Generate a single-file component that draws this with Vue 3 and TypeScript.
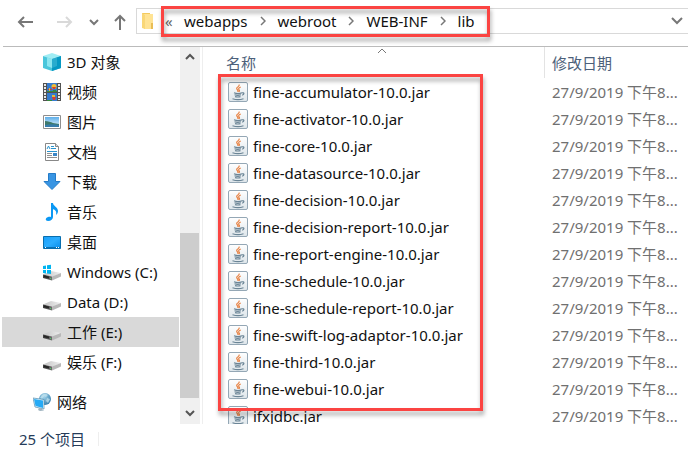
<script setup lang="ts">
interface Place {
  label: string
  icon: string
  root?: boolean
  selected?: boolean
}

const crumbs: string[] = ['webapps', 'webroot', 'WEB-INF', 'lib']

const places: Place[] = [
  { label: '3D 对象', icon: 'cube' },
  { label: '视频', icon: 'video' },
  { label: '图片', icon: 'picture' },
  { label: '文档', icon: 'document' },
  { label: '下载', icon: 'download' },
  { label: '音乐', icon: 'music' },
  { label: '桌面', icon: 'desktop' },
  { label: 'Windows (C:)', icon: 'windrive' },
  { label: 'Data (D:)', icon: 'drive' },
  { label: '工作 (E:)', icon: 'drive', selected: true },
  { label: '娱乐 (F:)', icon: 'drive' },
  { label: '网络', icon: 'network', root: true },
]

const files: string[] = [
  'fine-accumulator-10.0.jar',
  'fine-activator-10.0.jar',
  'fine-core-10.0.jar',
  'fine-datasource-10.0.jar',
  'fine-decision-10.0.jar',
  'fine-decision-report-10.0.jar',
  'fine-report-engine-10.0.jar',
  'fine-schedule-10.0.jar',
  'fine-schedule-report-10.0.jar',
  'fine-swift-log-adaptor-10.0.jar',
  'fine-third-10.0.jar',
  'fine-webui-10.0.jar',
  'ifxjdbc.jar',
]
const modified = '27/9/2019 下午8...'
</script>

<template>
  <div class="explorer">
    <svg class="sprite" aria-hidden="true">
      <defs>
        <linearGradient id="drive-top" x1="0" y1="0" x2="1" y2="0">
          <stop offset="0" stop-color="#c4c4c4" />
          <stop offset="1" stop-color="#eeeeee" />
        </linearGradient>
        <linearGradient id="drive-front" x1="0" y1="0" x2="1" y2="0">
          <stop offset="0" stop-color="#3c3c3c" />
          <stop offset="1" stop-color="#6e6e6e" />
        </linearGradient>
        <linearGradient id="tile" x1="0" y1="0" x2="0" y2="1">
          <stop offset="0" stop-color="#ffffff" />
          <stop offset="1" stop-color="#dde5ea" />
        </linearGradient>
        <linearGradient id="screen" x1="0" y1="0" x2="1" y2="1">
          <stop offset="0" stop-color="#18a0fb" />
          <stop offset="0.5" stop-color="#2cadff" />
          <stop offset="1" stop-color="#078ce9" />
        </linearGradient>
        <linearGradient id="sky" x1="0" y1="0" x2="0" y2="1">
          <stop offset="0" stop-color="#5eafea" />
          <stop offset="1" stop-color="#e8f6fc" />
        </linearGradient>
        <radialGradient id="globe" cx="0.4" cy="0.3" r="0.8">
          <stop offset="0" stop-color="#a8d8ed" />
          <stop offset="1" stop-color="#2875a8" />
        </radialGradient>
      </defs>
      <symbol id="cube" viewBox="0 0 18 18">
        <path d="M0 3 9 0l9 3-9 3z" fill="#a0edf4" />
        <path d="M0 3 9 6v12l-9-3z" fill="#49c6db" />
        <path d="M18 3 9 6v12l9-3z" fill="#079ac2" />
        <path d="M4 4.500 9 6l5-1.500V13l-5 2-5-2z" fill="#8be6f0" />
        <path d="M9 6v12l9-3V3z" fill="#0798c3" opacity=".75" />
      </symbol>
      <symbol id="video" viewBox="0 0 18 18">
        <path d="M0 0h18v18H0z" fill="#525252" />
        <path d="M4 0h10v9H4zM4 10h10v8H4z" fill="#377cce" />
        <path d="M1 1h2v2H1zM1 4h2v2H1zM1 7h2v2H1zM1 10h2v2H1zM1 13h2v2H1zM1 16h2v1H1zM15 1h2v2h-2zM15 4h2v2h-2zM15 7h2v2h-2zM15 10h2v2h-2zM15 13h2v2h-2zM15 16h2v1h-2z" fill="#e9e9e9" />
        <circle cx="11" cy="3.500" r="2.500" fill="#efbd36" />
        <path d="M9 4h4l-1 2h-2zM5 6h4v1H5zM9 14h4l-1 3h-2z" fill="#d43f33" />
        <path d="M4 8h10v1H4zM10 7h3v1h-3zM4 17h5v1H4z" fill="#37883f" />
        <path d="M6 5h1v3H6zM9 12h3v2H9z" fill="#e4b937" />
      </symbol>
      <symbol id="picture" viewBox="0 0 18 18">
        <path d="M.5 2.500h17v13H.5z" fill="#fff" stroke="#8e8e8e" />
        <path d="M2 4h14v10H2z" fill="url(#sky)" />
        <path d="M2 8c3 0 6 1 8 2l6 1v1H2z" fill="#3e796b" />
        <path d="M2 12c5-1 9-1 14 0v2H2z" fill="#367cab" />
      </symbol>
      <symbol id="document" viewBox="0 0 18 18">
        <path d="M2.500.5h10l3 3v14h-13z" fill="#fff" stroke="#888" />
        <path d="M12.500.5v3h3" fill="#ddd" stroke="#888" />
        <path d="m4 6 1.500-3L7 6M8 3.500h3M8 5.500h5M4 8.500h10" fill="none" stroke="#2893ce" />
        <path d="M4 10.500h5M4 12.500h5M4 14.500h10" stroke="#909090" />
        <path d="M10 10h4v3h-4z" fill="#3986c6" />
      </symbol>
      <symbol id="download" viewBox="0 0 18 18">
        <path d="M5.500.5h7v8h4.500L9 16.500 1 8.500h4.500z" fill="#3995e3" stroke="#247bc8" />
      </symbol>
      <symbol id="music" viewBox="0 0 18 18">
        <path d="M8 0h2c0 3 5 4 5 8 0 2-1 3-2 4 1-4-1-5-3-6v8c0 2-2 4-5 4-3 0-3-3 0-4 1-.5 2-.5 3 0z" fill="#0b98f4" />
      </symbol>
      <symbol id="desktop" viewBox="0 0 18 18">
        <path d="M.5 3.500h17v12H.5z" fill="url(#screen)" stroke="#096eae" />
        <path d="M1 14h16v1H1z" fill="#0871b5" />
        <path d="M2 14h1v1H2zM13 14h1v1h-1zM15 14h1v1h-1z" fill="#fff" />
      </symbol>
      <symbol id="drive" viewBox="0 0 18 18">
        <path d="m0 11.500 8-3.500 10 2-8 3.500z" fill="url(#drive-top)" />
        <path d="m9 13.500 9-3.500v3.500L9 17.500z" fill="#b8b8b8" />
        <path d="m0 11.500 9 2v4l-9-2.500z" fill="url(#drive-front)" />
        <path d="m1 12.500 5 1v2l-5-1.200z" fill="#262626" />
        <path d="M7 15h1v1H7z" fill="#45d064" />
      </symbol>
      <symbol id="windrive" viewBox="0 0 18 18">
        <use href="#drive" width="18" height="18" />
        <path d="m0 3 3-.5V6H0zM4 2.300 8 1.700V6H4zM0 7h3v3.500L0 10zM4 7h4v4l-4-.5z" fill="#00b5f1" />
      </symbol>
      <symbol id="network" viewBox="0 0 18 18">
        <circle cx="12" cy="6" r="6" fill="url(#globe)" />
        <path d="M9 2c2-2 4-2 6 0l-2 2-2-1-2 3-2-1zM14 5l3 1-2 4-2-2z" fill="#c7e6ef" opacity=".7" />
        <path d="m0 5 11 1.500V16L2 14z" fill="#e9f7fc" stroke="#4e8aad" stroke-width=".7" />
        <path d="m1 6 9 1.500V15l-7.500-2z" fill="#26aaf5" />
        <path d="m6 15 3 .5V16l2 1.500-4 .5-2-1z" fill="#9fb4c0" />
      </symbol>
      <symbol id="jar" viewBox="0 0 20 20">
        <rect x=".5" y=".5" width="19" height="19" rx="1.500" fill="url(#tile)" stroke="#94a7b5" />
        <path d="M11 2.500c1.500 2-4 3-1.800 5 1 1 1.200 1.600.5 2.500M12.800 5c-2.500 1-2.500 2-1.700 3 .7.8.4 1.300-.4 1.800" fill="none" stroke="#e88243" stroke-width="1.200" />
        <path d="M6 10.800c2 .8 6 .8 8 0M6.500 12.800c2 .6 4.500.6 6.500 0M7 14.600c2 .6 3.500.6 5.500 0M4.500 16.700c3 1 8 1 11 0M14 10.800c2.500-.4 2.500 1.600.2 2.400" fill="none" stroke="#6b8596" stroke-width="1.200" />
      </symbol>
    </svg>

    <header class="toolbar">
      <nav class="history" aria-label="History">
        <button type="button" aria-label="Back">
          <svg width="18" height="18" viewBox="0 0 18 18"><path d="M16 9H2M7 4 2 9l5 5" /></svg>
        </button>
        <button type="button" class="faded" aria-label="Forward">
          <svg width="18" height="18" viewBox="0 0 18 18"><path d="M2 9h14M11 4l5 5-5 5" /></svg>
        </button>
        <button type="button" class="recent" aria-label="Recent locations">
          <svg width="10" height="18" viewBox="0 0 10 18"><path d="m1 7 4 4 4-4" /></svg>
        </button>
        <button type="button" aria-label="Up">
          <svg width="18" height="18" viewBox="0 0 18 18"><path d="M9 17V3M4 8l5-5 5 5" /></svg>
        </button>
      </nav>
      <nav class="address" aria-label="Address">
        <svg class="folder" width="14" height="18" viewBox="0 0 14 18" aria-hidden="true">
          <path d="M1 1h8v15H1z" fill="#f3c95e" />
          <path d="M3 2h9v15H3z" fill="#ffe394" />
          <path d="m1 1 3 2v14l-3-1z" fill="#f9d777" />
          <path d="M10 11h2v6h-2z" fill="#e9bd55" />
        </svg>
        <ol class="crumbs">
          <li class="overflow">«</li>
          <li v-for="(crumb, i) in crumbs" :key="crumb">
            <svg v-if="i > 0" width="6" height="10" viewBox="0 0 6 10" aria-hidden="true"><path d="m1 1 4 4-4 4" /></svg>
            <a href="#">{{ crumb }}</a>
          </li>
        </ol>
        <button type="button" class="expand" aria-label="Previous locations">
          <svg width="12" height="8" viewBox="0 0 12 8"><path d="m1 1 5 5 5-5" /></svg>
        </button>
        <div class="callout callout-path"></div>
      </nav>
    </header>

    <main class="body">
      <aside class="sidebar">
        <ul class="places">
          <li v-for="place in places" :key="place.label" :class="{ root: place.root }">
            <a href="#" :class="{ selected: place.selected }">
              <svg width="18" height="18" aria-hidden="true"><use :href="'#' + place.icon" /></svg>
              <span>{{ place.label }}</span>
            </a>
          </li>
        </ul>
        <div class="scrollbar">
          <button type="button" aria-label="Scroll up">
            <svg width="10" height="8" viewBox="0 0 10 8"><path d="m1 6 4-4 4 4" /></svg>
          </button>
          <div class="track"><div class="thumb"></div></div>
          <button type="button" aria-label="Scroll down">
            <svg width="10" height="8" viewBox="0 0 10 8"><path d="m1 2 4 4 4-4" /></svg>
          </button>
        </div>
      </aside>

      <section class="listing">
        <table>
          <thead>
            <tr>
              <th class="name" scope="col">
                名称
                <svg class="sort" width="10" height="6" viewBox="0 0 10 6" aria-hidden="true"><path d="m1 5 4-4 4 4" /></svg>
              </th>
              <th scope="col">修改日期</th>
            </tr>
          </thead>
          <tbody>
            <tr v-for="file in files" :key="file">
              <td class="name">
                <div class="file">
                  <svg width="20" height="20" aria-hidden="true"><use href="#jar" /></svg>
                  <span>{{ file }}</span>
                </div>
              </td>
              <td class="date">{{ modified }}</td>
            </tr>
          </tbody>
        </table>
      </section>
      <div class="callout callout-files"></div>
    </main>

    <footer class="status"><span>25 个项目</span></footer>
  </div>
</template>

<style>
body {
  margin: 0;
  background: #fff;
}
</style>

<style scoped>
.explorer {
  display: flex;
  flex-direction: column;
  height: 100vh;
  overflow: hidden;
  font: 15px/20px "Noto Sans", "Noto Sans CJK SC", sans-serif;
  color: #111;
}
.sprite {
  position: absolute;
  width: 0;
  height: 0;
}
button {
  display: flex;
  align-items: center;
  justify-content: center;
  padding: 0;
  border: 0;
  background: none;
}
button path,
.crumbs path,
.sort path {
  fill: none;
  stroke: #777;
  stroke-width: 2;
}
a {
  color: inherit;
  text-decoration: none;
}
ul,
ol {
  margin: 0;
  padding: 0;
  list-style: none;
}
.toolbar {
  display: flex;
  flex: none;
  box-sizing: border-box;
  height: 47px;
  margin-left: 3px;
  padding-top: 8px;
  border-bottom: 1px solid #bbb;
}
.history {
  display: flex;
  gap: 20px;
  align-items: center;
  width: 119px;
  height: 27px;
  padding-left: 14px;
}
.history .faded path {
  stroke: #d9d9d9;
}
.history .recent {
  margin-right: -8px;
  margin-left: -4px;
}
.address {
  position: relative;
  display: flex;
  flex: 1;
  align-items: center;
  box-sizing: border-box;
  height: 26px;
  border: 1px solid #d9d9d9;
  border-right: 0;
}
.folder {
  margin-left: 4px;
}
.crumbs {
  display: flex;
  align-items: center;
  flex: 1;
  margin-left: 10px;
}
.crumbs li {
  display: flex;
  align-items: center;
}
.crumbs .overflow {
  width: 19px;
  color: #666;
}
.crumbs svg {
  margin: 0 12px;
}
.crumbs path {
  stroke-width: 1.5;
}
.expand {
  width: 22px;
  height: 24px;
}
.callout {
  position: absolute;
  box-sizing: border-box;
  border: 3px solid #fb4442;
  filter: drop-shadow(1px 4px 2px rgba(0, 0, 0, 0.35));
  pointer-events: none;
}
.callout-path {
  top: -3px;
  left: 24px;
  width: 329px;
  height: 31px;
}
.body {
  position: relative;
  display: flex;
  flex: 1;
  min-height: 0;
}
.sidebar {
  display: flex;
  flex: none;
  width: 200px;
  padding-right: 2px;
  border-right: 1px solid #eee;
}
.places {
  flex: 1;
  padding-left: 2px;
  overflow: hidden;
}
.places a {
  display: flex;
  align-items: center;
  gap: 6px;
  height: 30px;
  padding-left: 41px;
  margin-right: 1px;
}
.places .selected {
  background: #d9d9d9;
}
.places .root {
  padding-top: 10px;
}
.places .root a {
  padding-left: 31px;
}
.scrollbar {
  display: flex;
  flex-direction: column;
  width: 20px;
  background: #f0f0f0;
}
.scrollbar button {
  height: 20px;
}
.scrollbar button:last-child {
  height: 22px;
}
.scrollbar path {
  stroke: #555;
}
.track {
  display: flex;
  flex: 1;
  align-items: flex-end;
  margin-bottom: 4px;
}
.thumb {
  width: 19px;
  height: 50%;
  background: #cdcdcd;
}
.listing {
  flex: 1;
  min-width: 0;
  overflow: hidden;
}
table {
  width: 100%;
  table-layout: fixed;
  border-spacing: 0;
}
th,
td {
  box-sizing: border-box;
  height: 27px;
  padding: 0 0 0 7px;
  text-align: left;
  white-space: nowrap;
  font-weight: 400;
}
th {
  height: 31px;
  color: #4c607a;
}
.name {
  width: 342px;
  padding-left: 25px;
}
th.name {
  position: relative;
  padding-left: 23px;
  border-right: 1px solid #e3e3e3;
}
.sort {
  position: absolute;
  top: 1px;
  left: 50%;
  margin-left: 3px;
}
.sort path {
  stroke-width: 1;
}
.file {
  display: flex;
  align-items: center;
  gap: 5px;
}
.date {
  color: #707070;
}
.callout-files {
  top: 27px;
  left: 218px;
  width: 265px;
  height: 337px;
}
.status {
  display: flex;
  flex: none;
  align-items: center;
  height: 29px;
  padding-left: 19px;
  color: #263c5a;
}
.status span {
  padding-right: 13px;
  border-right: 1px solid #eee;
  line-height: 14px;
}
</style>
